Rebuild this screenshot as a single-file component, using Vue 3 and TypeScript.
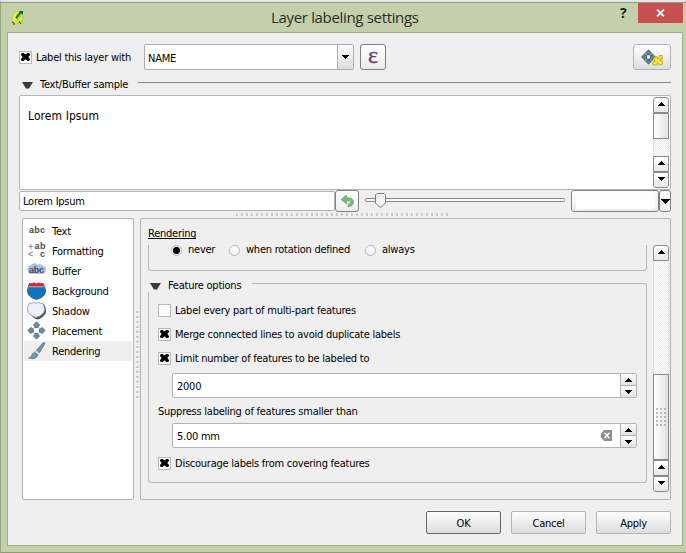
<script setup lang="ts">
import { ref } from 'vue'

interface Section {
  id: string
  label: string
}

const sections: Section[] = [
  { id: 'text', label: 'Text' },
  { id: 'formatting', label: 'Formatting' },
  { id: 'buffer', label: 'Buffer' },
  { id: 'background', label: 'Background' },
  { id: 'shadow', label: 'Shadow' },
  { id: 'placement', label: 'Placement' },
  { id: 'rendering', label: 'Rendering' },
]
const current = ref('rendering')

const rotations = ['never', 'when rotation defined', 'always']
const rotation = ref('never')

const labelLayer = ref(true)
const options = ref([
  { label: 'Label every part of multi-part features', on: false },
  { label: 'Merge connected lines to avoid duplicate labels', on: true },
  { label: 'Limit number of features to be labeled to', on: true },
])
const discourage = ref(true)
const limit = ref('2000')
const minSize = ref('5.00 mm')
const sample = ref('Lorem Ipsum')

const up = 'M3 0h1v1h1v1h1v1h1v1H0v-1h1v-1h1v-1h1z'
const down = 'M0 0h7v1h-1v1h-1v1h-1v1h-1v-1h-1v-1h-1v-1h-1z'
const cross = 'M0 1l1-1h1.6l1.9 1.6L6.4 0H8l1 1v1L7.3 4 9 6v1L8 8H6.4L4.5 6.3 2.6 8H1L0 7V6l1.7-2L0 2z'
</script>

<template>
  <div class="window">
    <header class="titlebar">
      <svg class="app-icon" width="14" height="16" viewBox="0 0 14 16">
        <path d="M3 3l3-2 2 1-2 4v4l2 2-3 2-3-1-1-4z" fill="#e6ee5c" stroke="#b9c63a" stroke-width=".7" />
        <path d="M8 7l3-2 1 3-1 5-3 1-2-3z" fill="#dbe64d" stroke="#aebb34" stroke-width=".7" />
        <path d="M5 8l5-6" stroke="#12830f" stroke-width="2" />
        <path d="M8 1h4v4z" fill="#0b6d0b" />
        <path d="M1 12l2 1v2M8 11l2 3" stroke="#333b14" fill="none" />
      </svg>
      <h1>Layer labeling settings</h1>
      <span class="help">?</span>
      <button class="close" aria-label="Close">
        <svg width="9" height="8" viewBox="0 0 9 8"><path d="M1 .5l7 7M8 .5l-7 7" stroke="#fff" stroke-width="1.8" /></svg>
      </button>
    </header>

    <main class="client">
      <div class="source-row">
        <label class="check" @click="labelLayer = !labelLayer">
          <i class="box"><svg v-if="labelLayer" width="9" height="8" viewBox="0 0 9 8"><path :d="cross" /></svg></i>
          <span>Label this layer with</span>
        </label>
        <div class="combo">
          <span class="combo-value">NAME</span>
          <span class="combo-arrow"><svg width="7" height="4" viewBox="0 0 7 4" shape-rendering="crispEdges"><path :d="down" /></svg></span>
        </div>
        <button class="tool dark epsilon">ε</button>
        <button class="tool engine" aria-label="Placement engine">
          <svg width="22" height="17" viewBox="0 0 22 17">
            <g fill="#5d8199" stroke="#3b5870" stroke-width=".8">
              <path d="M7.500 .8l3 3.200H9v2H6V4H4.500z" /><path d="M7.500 15.200l3-3.200H9v-2H6v2H4.500z" />
              <path d="M.5 8l3.200-3v1.500h2v3h-2V11z" /><path d="M14.500 8l-3.200-3v1.500h-2v3h2V11z" />
            </g>
            <path d="M3.500 4l2 2M11.500 4l-2 2M3.500 12l2-2M11.500 12l-2-2" stroke="#46647c" />
            <rect x="6" y="6.500" width="3" height="3" fill="#eef2f5" />
            <path d="M14 7.500h2v2h2v-3h3.300v3.700h-2v1.600h2v4h-3.500v-1.500h-2v1.500h-4v-3h2v-2h-1v-2H14z" fill="#f8e23c" stroke="#c9a512" stroke-width=".9" />
            <rect x="18.200" y="12.800" width="2" height="2" fill="#fff6b0" />
          </svg>
        </button>
      </div>

      <div class="sample-head">
        <svg width="11" height="7" viewBox="0 0 11 7"><path d="M0 0h11L7 6.500H4z" fill="#3a3a3a" /></svg>
        <span>Text/Buffer sample</span>
        <i class="rule"></i>
      </div>

      <section class="preview">
        <p>{{ sample }}</p>
        <div class="scrollbar">
          <span class="sb-btn top"><svg width="7" height="4" viewBox="0 0 7 4" shape-rendering="crispEdges"><path :d="up" /></svg></span>
          <span class="sb-thumb small"></span>
          <span class="sb-track"></span>
          <span class="sb-btn"><svg width="7" height="4" viewBox="0 0 7 4" shape-rendering="crispEdges"><path :d="up" /></svg></span>
          <span class="sb-btn bottom"><svg width="7" height="4" viewBox="0 0 7 4" shape-rendering="crispEdges"><path :d="down" /></svg></span>
        </div>
      </section>

      <div class="sample-row">
        <div class="line-edit">{{ sample }}</div>
        <button class="tool dark undo" aria-label="Reset sample">
          <svg width="13" height="12" viewBox="0 0 13 12">
            <path d="M0 4.500L5.500 0v2.800h2.200c3 0 4.800 1.700 4.800 4.200 0 2.700-2 4.500-5.500 4.700V9.200c1.500-.1 2.400-.8 2.400-1.900 0-1-.7-1.500-2-1.500H5.500V9z" fill="#7fb981" stroke="#5f9f68" stroke-width=".7" />
          </svg>
        </button>
        <div class="slider">
          <svg width="200" height="16" viewBox="0 0 200 16">
            <rect x=".5" y="6.500" width="199" height="3" rx="1" fill="#f6f6f6" stroke="#888" />
            <path d="M12 1.500h7l1.500 1.500v8l-4 4h-2l-4-4V3z" fill="#f4f4f4" stroke="#7c7c7c" />
            <path d="M12.500 4.500h2M17 4.500h2" stroke="#ccc" />
          </svg>
        </div>
        <button class="tool dark swatch" aria-label="Preview background"><i></i></button>
        <button class="tool dark swatch-menu" aria-label="Colour menu">
          <svg width="9" height="5" viewBox="0 0 9 5" shape-rendering="crispEdges"><path d="M0 0h9v1h-1v1h-1v1h-1v1h-1v1h-1v-1h-1v-1h-1v-1h-1v-1h-1z" /></svg>
        </button>
      </div>

      <div class="split-h"><i></i></div>

      <div class="body">
        <nav class="sections">
          <a v-for="s in sections" :key="s.id" :class="{ active: s.id === current }" @click="current = s.id">
            <svg width="20" height="20" viewBox="0 0 20 20">
              <text v-if="s.id === 'text'" class="abc" x="2" y="11.500" textLength="16">abc</text>
              <g v-else-if="s.id === 'formatting'">
                <text class="abc faint" x="1" y="8.500">+</text>
                <text class="abc" x="7.500" y="8" textLength="11">ab</text>
                <text class="abc faint" x="1" y="16">&lt;</text>
                <text class="abc" x="13" y="15.500">c</text>
              </g>
              <g v-else-if="s.id === 'buffer'">
                <path d="M4 4q2-2.500 5-1.500l1 1q4-1 5.500 1 3.500.5 3.500 4 0 4-4 4.500H5Q.5 13 .5 9 .5 5 4 4z" fill="#a5bdf3" />
                <text class="abc" x="2" y="11.500" textLength="15">abc</text>
              </g>
              <g v-else-if="s.id === 'background'">
                <path d="M2.500 2.500q2.500 1 4-.5 2.500 2 5.500 0 1.500 1.500 4 .5 2.500 4 2.500 7.500 0 6-9 8.500Q.5 16 .5 10q0-3.500 2-7.500z" fill="#0d74c0" stroke="#55606c" />
                <path d="M2.600 2q2.400 1 3.900-.5 2.500 2 5.500 0 1.500 1.500 4 .5l1.300 3.500H1.500z" fill="#e8212b" />
                <path d="M1.500 5.800h15.900" stroke="#c9d6e4" stroke-width=".8" />
              </g>
              <g v-else-if="s.id === 'shadow'">
                <path d="M5 4l12-1q2.500 4 2 8-1 5-8 7.500Q7 18 4 14z" fill="#4d5158" />
                <path d="M2.500 2q2 1 4-.7 2.500 2 5 0 2 1.700 4 .7 2 3 2 6.500 0 5.500-8.500 8Q.5 14 .5 8.500.5 5 2.500 2z" fill="#ecf1ff" stroke="#8d98bc" stroke-width=".9" />
              </g>
              <g v-else-if="s.id === 'placement'" fill="#6e8fa2" stroke="#4b6a7e" stroke-width=".8">
                <path d="M9.500 .8l3.200 3.400h-1.400v2.300H7.700V4.200H6.300z" />
                <path d="M9.500 18.200l3.200-3.400h-1.400v-2.300H7.700v2.300H6.300z" />
                <path d="M.8 9.500l3.400-3.200v1.400h2.300v3.600H4.200v1.400z" />
                <path d="M18.200 9.500l-3.400-3.200v1.400h-2.300v3.600h2.300v1.400z" />
              </g>
              <g v-else>
                <path d="M17.500 1.500l.3 1.200-5.300 8.800-3-2.300 6.500-7.200z" fill="#7299b4" stroke="#47677f" stroke-width=".8" />
                <path d="M9.300 9.500l2.800 2.300-1 1.700-3.300-2.300z" fill="#e4e9ed" stroke="#8a98a3" stroke-width=".6" />
                <path d="M7.500 11.300l3.300 2.400q-.8 4-5 4l-4.300-.5q2.500-.7 3-2.700.7-2.500 3-3.200z" fill="#6a9abb" stroke="#4b7590" stroke-width=".7" />
              </g>
            </svg>
            <span>{{ s.label }}</span>
          </a>
        </nav>

        <div class="split-v"><i></i></div>

        <section class="panel">
          <h2><span>Rendering</span></h2>
          <div class="viewport">
            <div class="content">
              <div class="rotation">
                <label v-for="(r, i) in rotations" :key="r" :class="'r' + i" @click="rotation = r">
                  <i class="radio" :class="{ on: r === rotation }"></i><span>{{ r }}</span>
                </label>
              </div>

              <div class="group-head">
                <div class="group-title">
                  <svg width="11" height="7" viewBox="0 0 11 7"><path d="M0 0h11L7 6.500H4z" fill="#3a3a3a" /></svg>
                  <span>Feature options</span>
                </div>
                <i class="group-line"></i>
              </div>
              <div class="group-body">
                <label v-for="(o, i) in options" :key="i" class="check opt" @click="o.on = !o.on">
                  <i class="box"><svg v-if="o.on" width="9" height="8" viewBox="0 0 9 8"><path :d="cross" /></svg></i>
                  <span>{{ o.label }}</span>
                </label>
                <div class="spin">
                  <span class="spin-value">{{ limit }}</span>
                  <span class="spin-btns">
                    <b><svg width="7" height="4" viewBox="0 0 7 4" shape-rendering="crispEdges"><path :d="up" /></svg></b>
                    <b><svg width="7" height="4" viewBox="0 0 7 4" shape-rendering="crispEdges"><path :d="down" /></svg></b>
                  </span>
                </div>
                <div class="suppress"><span>Suppress labeling of features smaller than</span></div>
                <div class="spin second">
                  <span class="spin-value">{{ minSize }}</span>
                  <svg class="clear" width="11" height="11" viewBox="0 0 11 11">
                    <path d="M3 0h8v11H3L0 7.500v-4z" fill="#8f8f8f" />
                    <path d="M3.500 2.700l5 5.600M8.500 2.700l-5 5.600" stroke="#fff" stroke-width="1.500" />
                  </svg>
                  <span class="spin-btns">
                    <b><svg width="7" height="4" viewBox="0 0 7 4" shape-rendering="crispEdges"><path :d="up" /></svg></b>
                    <b><svg width="7" height="4" viewBox="0 0 7 4" shape-rendering="crispEdges"><path :d="down" /></svg></b>
                  </span>
                </div>
                <label class="check opt last" @click="discourage = !discourage">
                  <i class="box"><svg v-if="discourage" width="9" height="8" viewBox="0 0 9 8"><path :d="cross" /></svg></i>
                  <span>Discourage labels from covering features</span>
                </label>
              </div>
            </div>
            <div class="scrollbar">
              <span class="sb-btn top"><svg width="7" height="4" viewBox="0 0 7 4" shape-rendering="crispEdges"><path :d="up" /></svg></span>
              <span class="sb-track"></span>
              <span class="sb-thumb large"><i class="grip"></i></span>
              <span class="sb-btn"><svg width="7" height="4" viewBox="0 0 7 4" shape-rendering="crispEdges"><path :d="up" /></svg></span>
              <span class="sb-btn bottom"><svg width="7" height="4" viewBox="0 0 7 4" shape-rendering="crispEdges"><path :d="down" /></svg></span>
            </div>
          </div>
        </section>
      </div>

      <footer class="actions">
        <button class="push default">OK</button>
        <button class="push">Cancel</button>
        <button class="push">Apply</button>
      </footer>
    </main>
  </div>
</template>

<style>
body {
  margin: 0;
  overflow: hidden;
}
</style>

<style scoped>
* {
  box-sizing: border-box;
}
svg {
  display: block;
  flex: none;
}
button {
  margin: 0;
  padding: 0;
  font: inherit;
  letter-spacing: inherit;
  color: inherit;
}
.window {
  width: 686px;
  height: 553px;
  padding: 0 3px 7px 6px;
  border-top: 2px solid #e3e6e8;
  border-left: 1px solid #99a483;
  border-bottom: 1px solid #8f9a7a;
  background: #c3d0ab;
  box-shadow: inset 0 1px #929c80;
  font-family: 'DejaVu Sans Condensed', 'DejaVu Sans', sans-serif;
  font-stretch: condensed;
  font-size: 11px;
  line-height: 16px;
  letter-spacing: -0.24px;
  color: #000;
  white-space: nowrap;
}
.titlebar {
  display: flex;
  height: 30px;
  align-items: flex-start;
}
.app-icon {
  margin: 8px 0 0 4px;
}
h1 {
  flex: 1;
  margin: 6px 0 0 0;
  padding-left: 246px;
  font: 15px/19px 'Open Sans', sans-serif;
  letter-spacing: -0.33px;
  color: #2b2d28;
}
.help {
  width: 18px;
  margin: 2px 0 0;
  font: bold 14px/18px 'Open Sans', sans-serif;
  color: #1e1e1e;
}
.close {
  display: flex;
  width: 45px;
  height: 20px;
  margin: 1px 0 0;
  border: 0;
  align-items: center;
  justify-content: center;
  background: #c75050;
}
.client {
  height: 514px;
  padding: 11px 11px 0;
  border: 1px solid #9fae86;
  background: #efefef;
}
.source-row {
  display: flex;
  height: 26px;
}
.check {
  display: flex;
  align-items: center;
}
.check span {
  padding-top: 1px;
}
.source-row .check {
  width: 125px;
}
.box {
  display: flex;
  width: 13px;
  height: 13px;
  margin-right: 4px;
  align-items: center;
  justify-content: center;
  border: 1px solid #b9b9b9;
  background: #fafafa;
}
.combo {
  display: flex;
  width: 210px;
  border: 1px solid #acacac;
  border-radius: 2px;
  background: #fff;
}
.combo-value {
  flex: 1;
  padding: 6px 0 0 3px;
}
.combo-arrow {
  display: flex;
  width: 16px;
  align-items: center;
  justify-content: center;
  border-left: 1px solid #b2b2b2;
  background: linear-gradient(#fdfdfd, #dcdcdc);
}
.tool {
  display: flex;
  align-items: center;
  justify-content: center;
  border: 1px solid #b4b4b4;
  border-radius: 3px;
  background: linear-gradient(#fff, #ececec);
}
.tool.dark {
  border-color: #808080;
}
.epsilon {
  width: 26px;
  margin-left: 6px;
  padding-bottom: 5px;
  font: 24px/20px 'Liberation Serif', serif;
  -webkit-text-stroke: 0.4px #6d4479;
  color: #6d4479;
}
.engine {
  width: 38px;
  margin-left: auto;
  background: linear-gradient(#fefefe, #dedede);
}
.sample-head {
  display: flex;
  height: 25px;
  padding: 7px 0 0 3px;
}
.sample-head svg {
  margin-top: 5px;
}
.sample-head span {
  width: 98px;
  margin-left: 7px;
}
.rule {
  flex: 1;
  height: 1px;
  margin-top: 5px;
  background: #858585;
}
.preview {
  display: flex;
  height: 95px;
  padding: 1px 1px 1px 0;
  justify-content: space-between;
  border: 1px solid #b5b5b5;
  border-radius: 2px;
  background: #fff;
}
.preview p {
  margin: 11px 0 0 8px;
  font-size: 12px;
  letter-spacing: 0.08px;
}
.scrollbar {
  display: flex;
  width: 16px;
  flex-direction: column;
}
.sb-btn,
.sb-thumb {
  display: flex;
  height: 16px;
  flex: none;
  align-items: center;
  justify-content: center;
  border: 1px solid #8a8a8a;
  background: linear-gradient(#fff, #e8e8e8);
}
.sb-btn {
  padding-bottom: 2px;
}
.sb-btn.top {
  border-radius: 3px 3px 0 0;
}
.sb-btn.bottom {
  border-radius: 0 0 3px 3px;
}
.sb-thumb {
  background: linear-gradient(90deg, #fff, #e2e2e2);
}
.sb-thumb.small {
  height: 26px;
}
.sb-thumb.large {
  height: 86px;
}
.sb-track {
  flex: 1;
  border: dotted #cfcfcf;
  border-width: 0 1px;
  background: repeating-conic-gradient(#fff 0 25%, #eaeaea 0 50%) 0 0 / 2px 2px;
}
.grip {
  width: 10px;
  height: 18px;
  background: radial-gradient(circle at 1px 1px, #b8b8b8 1px, transparent 1.2px) 0 0 / 4px 4px;
}
.sample-row {
  display: flex;
  height: 22px;
}
.line-edit {
  width: 316px;
  height: 20px;
  margin-top: 1px;
  padding: 2px 0 0 3px;
  border: 1px solid #b2b2b2;
  border-radius: 2px;
  background: #fff;
}
.undo {
  width: 24px;
  padding-bottom: 1px;
}
.slider {
  flex: 1;
  padding: 2px 0 0 6px;
}
.swatch {
  width: 88px;
}
.swatch i {
  width: 79px;
  height: 16px;
  border-radius: 2px;
  background: #fff;
}
.swatch-menu {
  width: 12px;
}
.split-h {
  height: 6px;
  padding: 1px 0 0 217px;
}
.split-h i {
  display: block;
  width: 213px;
  height: 3px;
  background: repeating-linear-gradient(90deg, #cbcbcb 0 2px, #f6f6f6 2px 3px, transparent 3px 5px);
}
.body {
  display: flex;
  height: 282px;
  padding-left: 3px;
}
.sections {
  width: 112px;
  padding: 2px 1px;
  border: 1px solid #b2b2b2;
  border-radius: 2px;
  background: #fff;
}
.sections a {
  display: flex;
  height: 20px;
  padding-left: 3px;
  align-items: center;
}
.sections a.active {
  background: #efefef;
}
.sections span {
  padding-top: 1px;
  margin-left: 5px;
}
.abc {
  font: bold 9px 'Liberation Sans', sans-serif;
  letter-spacing: 0;
  fill: #4c4c4c;
}
.abc.faint {
  fill: #8c8c8c;
}
.split-v {
  width: 6px;
  padding: 93px 0 0 2px;
}
.split-v i {
  display: block;
  width: 3px;
  height: 88px;
  background: repeating-linear-gradient(#cbcbcb 0 2px, #f6f6f6 2px 3px, transparent 3px 5px);
}
.panel {
  width: 531px;
  padding: 0 1px 0 7px;
  border: 1px solid #b2b2b2;
  border-radius: 2px;
}
h2 {
  height: 26px;
  margin: 0;
  padding-top: 7px;
  font-size: 11px;
  font-weight: normal;
}
h2 span {
  display: inline-block;
  height: 13px;
  border-bottom: 1px solid #000;
}
.viewport {
  display: flex;
  height: 247px;
  justify-content: space-between;
}
.content {
  width: 499px;
}
.rotation {
  display: flex;
  height: 26px;
  padding-left: 22px;
  border: solid #b9b9b9;
  border-width: 0 1px 1px;
  border-radius: 0 0 3px 3px;
}
.rotation label {
  display: flex;
  height: 10px;
  align-items: center;
}
.rotation .r0 {
  width: 58px;
}
.rotation .r1 {
  width: 136px;
}
.radio {
  width: 11px;
  height: 11px;
  margin-right: 6px;
  border: 1px solid #b5b5b5;
  border-radius: 50%;
  background: linear-gradient(#fff, #f3f3f3);
}
.radio.on {
  background: radial-gradient(circle, #000 0 3.2px, #fff 4px);
}
.group-head {
  display: flex;
  height: 9px;
  margin-top: 12px;
}
.group-title {
  display: flex;
  width: 104px;
  height: 16px;
  margin-top: -5px;
  padding-left: 2px;
}
.group-title svg {
  margin-top: 5px;
}
.group-title span {
  margin-left: 7px;
}
.group-line {
  flex: 1;
  border: solid #b9b9b9;
  border-width: 1px 1px 0 0;
  border-radius: 0 3px 0 0;
}
.group-body {
  height: 191px;
  padding: 6px 9px 0;
  border: solid #b9b9b9;
  border-width: 0 1px 1px;
  border-radius: 0 0 3px 3px;
}
.opt {
  height: 24px;
}
.spin {
  display: flex;
  width: 465px;
  height: 25px;
  margin: 3px 0 0 14px;
  align-items: center;
  border: 1px solid #b2b2b2;
  border-radius: 2px;
  background: #fff;
}
.spin.second {
  margin-top: 0;
}
.spin.second + .last {
  margin-top: 3px;
}
.spin-value {
  flex: 1;
  padding: 2px 0 0 4px;
}
.clear {
  margin-right: 8px;
}
.spin-btns {
  display: grid;
  width: 16px;
  height: 23px;
  grid-template-rows: 12px 11px;
  border-left: 1px solid #b2b2b2;
}
.spin-btns b {
  display: flex;
  align-items: center;
  justify-content: center;
  background: linear-gradient(#fdfdfd, #e2e2e2);
}
.spin-btns b:first-child {
  border-bottom: 1px solid #b2b2b2;
}
.suppress {
  height: 25px;
  padding: 6px 0 0;
}
.actions {
  display: flex;
  margin-top: 11px;
  gap: 10px;
  justify-content: flex-end;
}
.push {
  width: 75px;
  height: 23px;
  padding-top: 2px;
  border: 1px solid #b4b4b4;
  border-radius: 2px;
  background: linear-gradient(#fdfdfd, #dddddd);
  text-align: center;
}
.push.default {
  border-color: #666;
}
</style>
